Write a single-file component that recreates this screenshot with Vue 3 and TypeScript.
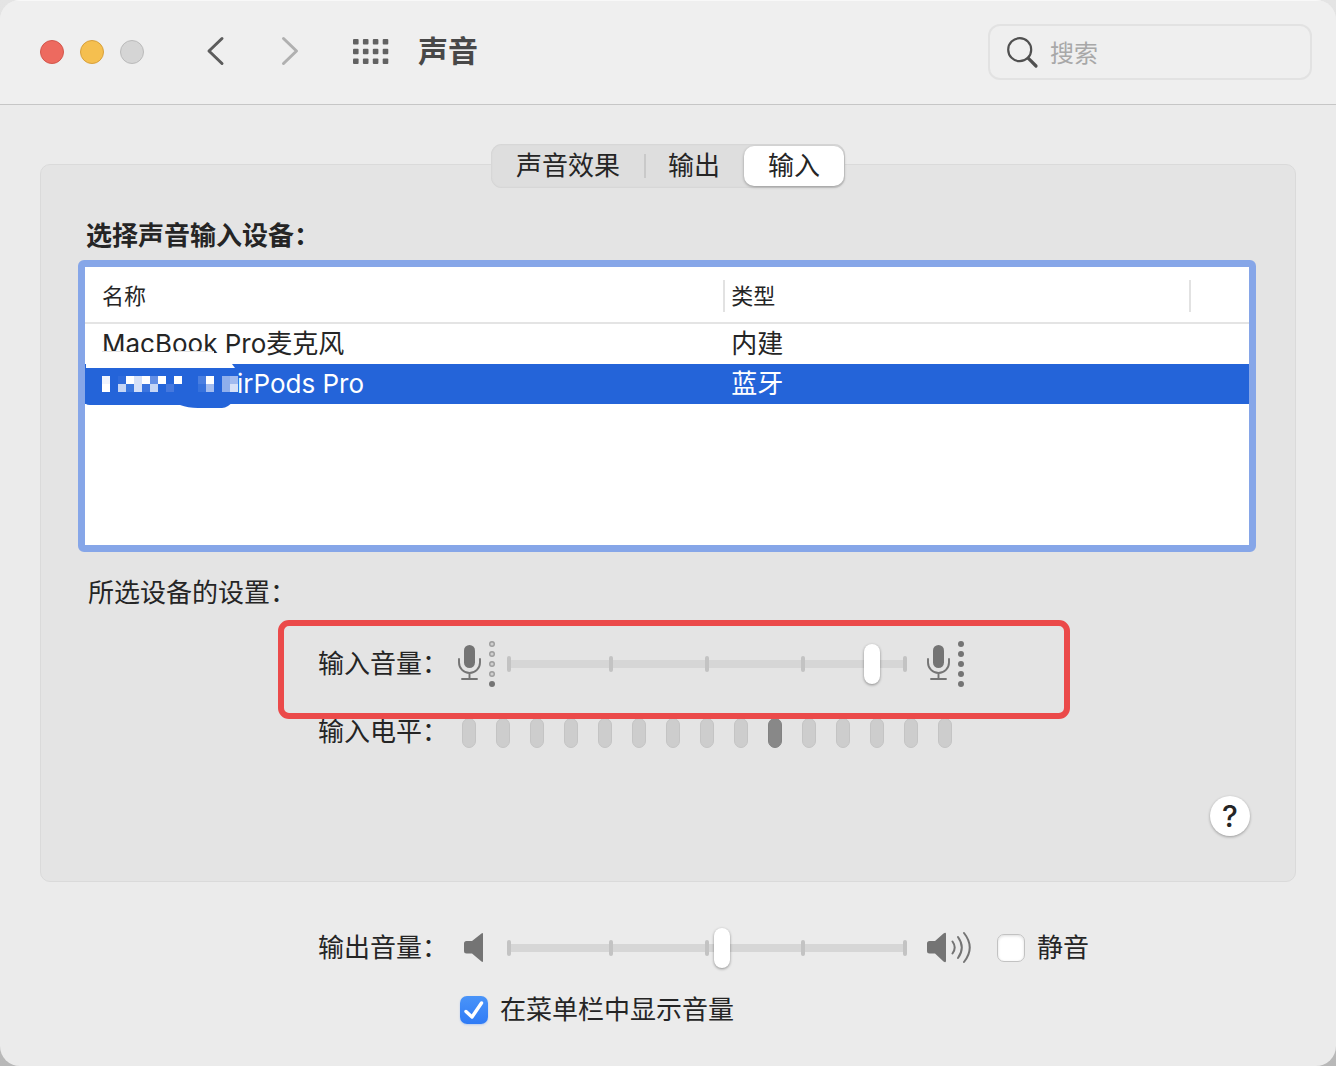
<script setup lang="ts">
import { ref } from 'vue'

type Device = { name: string; kind: string; masked?: boolean }

const tabs = ['声音效果', '输出', '输入']
const activeTab = ref(2)

const devices: Device[] = [
  { name: 'MacBook Pro麦克风', kind: '内建' },
  { name: 'irPods Pro', kind: '蓝牙', masked: true },
]
const selectedDevice = ref(1)

const inputVolume = ref(93)
const outputVolume = ref(54)
const muted = ref(false)
const showInMenuBar = ref(true)

const levelCount = 15
const currentLevel = 10

// Column, row and colour of every block in the mosaic over the device name
const mosaic: [number, number, string][] = [
  [0, 0, '#f0f4fd'], [0, 1, '#ffffff'],
  [2, 0, '#2f6bdb'], [2, 1, '#c6d6f5'],
  [3, 0, '#ffffff'], [3, 1, '#3b77df'],
  [4, 0, '#d4e0f8'], [4, 1, '#d4e0f8'],
  [5, 0, '#ffffff'], [5, 1, '#3b74de'],
  [6, 0, '#6590e6'], [6, 1, '#c6d6f5'],
  [7, 0, '#ffffff'], [8, 1, '#4578de'],
  [9, 0, '#ffffff'],
  [12, 0, '#4a7fe1'], [12, 1, '#3672dd'],
  [13, 0, '#ffffff'], [13, 1, '#a3bdf0'],
  [15, 0, '#8fafec'], [15, 1, '#8fafec'],
  [16, 0, '#a0baef'], [16, 1, '#d6e1f8'],
]
</script>

<template>
  <main class="window">
    <header class="toolbar">
      <div class="lights">
        <button class="light close" aria-label="关闭"></button>
        <button class="light minimize" aria-label="最小化"></button>
        <button class="light zoom" aria-label="缩放" disabled></button>
      </div>
      <nav class="history">
        <button class="icon-button" aria-label="后退">
          <svg width="24" height="32" viewBox="0 0 24 32"><path d="M18 2.500 5 15l13 12.500" fill="none" stroke="#5c5c5c" stroke-width="3" stroke-linecap="round" stroke-linejoin="round" /></svg>
        </button>
        <button class="icon-button" aria-label="前进">
          <svg width="24" height="32" viewBox="0 0 24 32"><path d="M5.500 2.500 18.500 15l-13 12.500" fill="none" stroke="#b0b0b0" stroke-width="3" stroke-linecap="round" stroke-linejoin="round" /></svg>
        </button>
      </nav>
      <button class="icon-button all" aria-label="显示全部">
        <svg width="36" height="26" viewBox="0 0 36 26" fill="#626262">
          <template v-for="r in 3" :key="r">
            <rect v-for="c in 4" :key="c" :x="(c - 1) * 9.900" :y="(r - 1) * 9.700" width="5.600" height="5.600" rx="1" />
          </template>
        </svg>
      </button>
      <h1 class="title">声音</h1>
      <label class="search">
        <svg width="34" height="34" viewBox="0 0 34 34" fill="none" stroke="#505050" stroke-linecap="round">
          <circle cx="13.700" cy="14.700" r="11.500" stroke-width="2.200" />
          <path d="M22.200 23.200 30 31" stroke-width="3.200" />
        </svg>
        <input type="search" placeholder="搜索" aria-label="搜索" />
      </label>
    </header>

    <section class="content">
      <div class="tabs" role="tablist">
        <button
          v-for="(tab, i) in tabs"
          :key="tab"
          role="tab"
          class="tab"
          :class="{ active: i === activeTab }"
          :aria-selected="i === activeTab"
          @click="activeTab = i"
        >{{ tab }}</button>
      </div>

      <div class="panel">
        <h2 class="heading">选择声音输入设备：</h2>

        <div class="list">
          <table class="devices">
            <colgroup><col class="col-name" /><col class="col-kind" /><col /></colgroup>
            <thead>
              <tr>
                <th scope="col"><span>名称</span></th>
                <th scope="col"><span>类型</span></th>
                <th><span></span></th>
              </tr>
            </thead>
            <tbody>
              <tr
                v-for="(device, i) in devices"
                :key="device.name"
                :class="{ selected: i === selectedDevice }"
                @click="selectedDevice = i"
              >
                <td :class="{ masked: device.masked }">{{ device.name }}</td>
                <td>{{ device.kind }}</td>
                <td></td>
              </tr>
            </tbody>
          </table>
          <svg class="mask" width="160" height="60" viewBox="0 0 160 60" aria-hidden="true">
            <path d="M0 17H148V50Q142 58 136 58H112Q102 58 94 55H4Q1 55 0 54Z" fill="#2464d9" />
            <path d="M0 2H128V14H146L149 18H0Z" fill="#fff" />
            <path d="M16 1.500H40M90 1.500H128" stroke="#e2e2e2" />
            <rect
              v-for="([c, r, color], i) in mosaic"
              :key="i"
              :x="16 + c * 8"
              :y="26 + r * 8"
              width="8"
              height="8"
              :fill="color"
            />
          </svg>
        </div>

        <p class="caption">所选设备的设置：</p>

        <div class="row volume highlighted">
          <label class="name" for="input-volume">输入音量：</label>
          <svg class="low" width="40" height="48" viewBox="0 0 40 48">
            <rect x="6" y="5" width="11" height="23" rx="5.500" fill="#747474" />
            <path d="M1 19v3.500a10.500 10.500 0 0 0 21 0V19M11.500 33v6M4 39h15" fill="none" stroke="#747474" stroke-width="1.900" stroke-linecap="round" />
            <g fill="#cfcfcf" stroke="#9d9d9d" stroke-width="1.400">
              <circle v-for="n in 4" :key="n" cx="34" :cy="n * 10 - 6" r="2.300" />
            </g>
            <circle cx="34" cy="44" r="3" fill="#747474" />
          </svg>
          <div class="slider">
            <i v-for="n in 5" :key="n" class="tick"></i>
            <input id="input-volume" v-model="inputVolume" type="range" min="0" max="100" />
          </div>
          <svg class="high" width="40" height="48" viewBox="-1 0 40 48">
            <rect x="6" y="5" width="11" height="23" rx="5.500" fill="#747474" />
            <path d="M1 19v3.500a10.500 10.500 0 0 0 21 0V19M11.500 33v6M4 39h15" fill="none" stroke="#747474" stroke-width="1.900" stroke-linecap="round" />
            <circle v-for="n in 5" :key="n" cx="34" :cy="n * 10 - 6" r="3" fill="#747474" />
          </svg>
        </div>

        <div class="row level">
          <span id="level-name" class="name">输入电平：</span>
          <div class="bars" role="meter" aria-labelledby="level-name" aria-valuemin="0" :aria-valuemax="levelCount" :aria-valuenow="currentLevel">
            <i v-for="n in levelCount" :key="n" class="bar" :class="{ on: n === currentLevel }"></i>
          </div>
        </div>

        <div class="help-row">
          <button class="help" aria-label="帮助">?</button>
        </div>
      </div>

      <footer class="footer">
        <div class="row volume">
          <label class="name" for="output-volume">输出音量：</label>
          <svg class="low" width="40" height="48" viewBox="0 0 40 48">
            <path d="M8.500 17H14l9.500-7.500Q25 8.500 25 10v27q0 1.500-1.500.5L14 29.500H8.500q-2.500 0-2.500-2.500v-7.500q0-2.500 2.500-2.500Z" fill="#747474" />
          </svg>
          <div class="slider">
            <i v-for="n in 5" :key="n" class="tick"></i>
            <input id="output-volume" v-model="outputVolume" type="range" min="0" max="100" />
          </div>
          <svg class="high" width="46" height="48" viewBox="0 0 46 48">
            <path d="M3.500 17H9l8.500-7.500Q20 8 20 10v27q0 2-2.500.5L9 29.500H3.500Q1 29.500 1 27v-7.500Q1 17 3.500 17Z" fill="#747474" />
            <path d="M26.500 17.500q4.400 6 0 12M32 13q7.600 10.500 0 21M38 9q11.500 14.500 0 29" fill="none" stroke="#747474" stroke-width="2" stroke-linecap="round" />
          </svg>
          <label class="check mute"><input v-model="muted" type="checkbox" />静音</label>
        </div>
        <div class="row">
          <label class="check menu-bar"><input v-model="showInMenuBar" type="checkbox" />在菜单栏中显示音量</label>
        </div>
      </footer>
    </section>
  </main>
</template>

<style>
body {
  margin: 0;
  background: linear-gradient(#e4e4e4, #b8b8b8);
}
</style>

<style scoped>
*,
*::before,
*::after {
  box-sizing: border-box;
}

.window {
  display: flex;
  flex-direction: column;
  min-height: 100vh;
  overflow: hidden;
  border-radius: 20px;
  background: #ebebeb;
  color: #252525;
  font: 26px/40px Inter, "Noto Sans CJK SC", sans-serif;
}

button,
input {
  margin: 0;
  padding: 0;
  border: 0;
  color: inherit;
  font: inherit;
}

svg {
  display: block;
  flex: none;
}

h1,
h2,
p {
  margin: 0;
}

/* Toolbar */
.toolbar {
  display: flex;
  align-items: center;
  height: 105px;
  padding: 0 24px 1px 40px;
  border-top: 1px solid #f8f8f8;
  border-bottom: 1px solid #c6c6c6;
  background: #efefef;
}

.lights {
  display: flex;
  gap: 16px;
}

.light {
  width: 24px;
  height: 24px;
  border: 1px solid;
  border-radius: 50%;
}

.close {
  border-color: #d3574c;
  background: #ed6a5f;
}

.minimize {
  border-color: #d8a03c;
  background: #f5bf4f;
}

.zoom {
  border-color: #bbb;
  background: #d5d5d5;
}

.history {
  display: flex;
  gap: 50px;
  margin-left: 60px;
}

.icon-button {
  background: none;
}

.all {
  margin: 0 29px 0 51px;
}

.title {
  padding-bottom: 2px;
  color: #484848;
  font-size: 30px;
  font-weight: 700;
}

.search {
  display: flex;
  align-items: center;
  gap: 10px;
  width: 324px;
  height: 56px;
  margin-left: auto;
  padding: 0 14px 0 16px;
  border: 2px solid #e2e2e2;
  border-radius: 12px;
}

.search input {
  flex: 1;
  min-width: 0;
  padding-top: 4px;
  outline: 0;
  background: none;
  font-size: 24px;
}

.search input::placeholder {
  color: #a8a8a8;
  opacity: 1;
}

/* Tabs */
.content {
  display: flex;
  flex-direction: column;
  padding: 39px 40px 24px;
}

.tabs {
  z-index: 1;
  display: flex;
  align-self: center;
  padding: 2px 1px;
  border-radius: 11px;
  background: #dedede;
  box-shadow: inset 0 0 2px #c4c4c4;
}

.tab {
  display: flex;
  align-items: center;
  padding: 0 24px;
  border-radius: 10px;
  background: none;
}

.tab:first-child::after {
  width: 2px;
  height: 24px;
  margin: 0 -26px 0 24px;
  background: #c9c9c9;
  content: "";
}

.tab.active {
  background: #fff;
  box-shadow: 0 1px 3px #0005;
}

/* Device panel */
.panel {
  margin-top: -24px;
  padding: 51px 39px 45px 37px;
  border: 1px solid #dadada;
  border-radius: 10px;
  background: #e4e4e4;
}

.heading {
  padding-left: 8px;
  font-size: 26px;
  font-weight: 700;
}

.list {
  position: relative;
  height: 292px;
  margin-top: 4px;
  border: 7px solid #86a6e8;
  border-radius: 6px;
  background: #fff;
}

.devices {
  width: 100%;
  border-spacing: 0;
  table-layout: fixed;
}

.col-name {
  width: 55%;
}

.col-kind {
  width: 40%;
}

.devices th {
  height: 57px;
  padding: 2px 0 0;
  border-bottom: 2px solid #e4e4e4;
  font-size: 22px;
  font-weight: 400;
  text-align: left;
}

.devices th span {
  display: block;
  height: 32px;
  margin-left: -2px;
  padding-left: 6px;
  border-left: 2px solid #e2e2e2;
  line-height: 32px;
}

.devices th:first-child span {
  margin-left: 0;
  padding-left: 17px;
  border: 0;
}

.devices td {
  height: 40px;
  padding: 0 0 0 6px;
  line-height: 38px;
  white-space: nowrap;
}

.devices td:first-child {
  padding-left: 17px;
}

.devices td.masked:first-child {
  padding-left: 152px;
}

.selected {
  background: #2464d9;
  color: #fff;
}

.mask {
  position: absolute;
  top: 83px;
  left: 1px;
}

.caption {
  margin-top: 21px;
  padding-left: 10px;
}

/* Setting rows */
.row {
  display: flex;
  align-items: center;
}

.panel .row {
  margin-left: 240px;
}

.name {
  flex: none;
  width: 140px;
}

.volume {
  height: 48px;
}

.highlighted {
  position: relative;
  margin-top: 27px;
}

.highlighted::after {
  position: absolute;
  z-index: 3;
  top: -20px;
  left: -40px;
  width: 792px;
  height: 99px;
  border: 6px solid #eb4a4a;
  border-radius: 11px;
  content: "";
  pointer-events: none;
}

.slider {
  position: relative;
  display: flex;
  align-items: center;
  justify-content: space-between;
  flex: none;
  width: 400px;
  height: 48px;
  margin: 0 19px 0 9px;
}

.slider::before {
  position: absolute;
  right: 2px;
  left: 2px;
  height: 8px;
  background: #d6d6d6;
  content: "";
}

.tick {
  z-index: 1;
  width: 4px;
  height: 16px;
  border-radius: 2px;
  background: #c3c3c3;
}

.tick:nth-of-type(2) {
  margin-left: 6px;
}

.tick:nth-of-type(4) {
  margin-right: 6px;
}

.slider input {
  position: absolute;
  z-index: 2;
  inset: 0;
  width: 100%;
  background: none;
  appearance: none;
}

.slider input::-webkit-slider-thumb {
  width: 16px;
  height: 40px;
  border-radius: 8px;
  background: #fff;
  box-shadow: 0 1px 3px #0006;
  appearance: none;
}

.level {
  margin-top: 24px;
}

.bars {
  display: flex;
  gap: 20px;
  padding: 2px 0 0 4px;
}

.bar {
  width: 14px;
  height: 30px;
  border: 1px solid #c4c4c4;
  border-radius: 7px;
  background: #cdcdcd;
}

.bar.on {
  border-color: #828282;
  background: #888;
}

.help-row {
  display: flex;
  justify-content: flex-end;
  padding: 44px 6px 0 0;
}

.help {
  width: 40px;
  height: 40px;
  border-radius: 50%;
  background: #fff;
  box-shadow: 0 1px 3px #0005;
  font-size: 30px;
  font-weight: 500;
}

/* Output controls */
.footer {
  display: flex;
  flex-direction: column;
  gap: 18px;
  padding: 42px 0 0 278px;
}

.check {
  display: flex;
  align-items: center;
  gap: 12px;
  white-space: nowrap;
}

.check input {
  width: 28px;
  height: 28px;
  border: 1px solid #c2c2c2;
  border-radius: 7px;
  background: #fff;
  box-shadow: inset 0 1px 3px #0002;
  appearance: none;
}

.check input:checked {
  border: 0;
  background: url("data:image/svg+xml,%3Csvg xmlns='http://www.w3.org/2000/svg' viewBox='0 0 28 28'%3E%3Cpath d='M6 15.500 12 21 21.500 7' fill='none' stroke='white' stroke-width='3.400' stroke-linecap='round' stroke-linejoin='round'/%3E%3C/svg%3E"), linear-gradient(#4a94f8, #2f7bf6);
  box-shadow: 0 1px 2px #2f7bf644;
}

.mute {
  margin-left: 25px;
}

.menu-bar {
  margin-left: 142px;
}
</style>
